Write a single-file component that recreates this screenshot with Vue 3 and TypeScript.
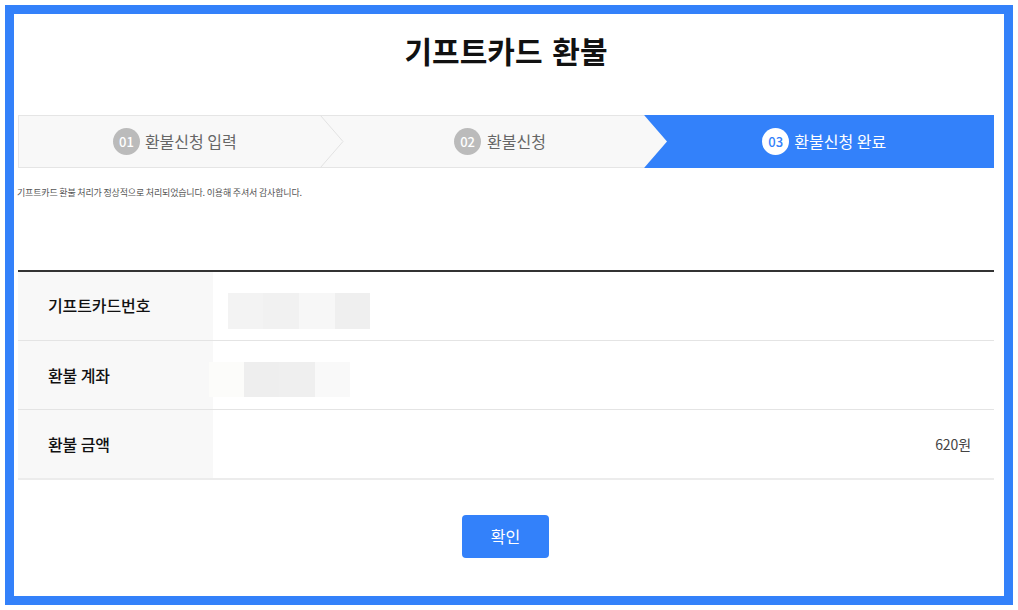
<script setup lang="ts">
interface Step { num: string; label: string; cls: string }
interface Cell { width: number; color: string }
const steps: Step[] = [
  { num: '01', label: '환불신청 입력', cls: 'one' },
  { num: '02', label: '환불신청', cls: 'two' },
  { num: '03', label: '환불신청 완료', cls: 'three' },
]
const cardCells: Cell[] = [
  { width: 35, color: '#f3f3f3' },
  { width: 36, color: '#f1f1f1' },
  { width: 36, color: '#f7f7f7' },
  { width: 35, color: '#efefef' },
]
const accountCells: Cell[] = [
  { width: 35, color: '#fcfcfa' },
  { width: 35, color: '#eeeeee' },
  { width: 36, color: '#efefef' },
  { width: 35, color: '#f9f9f9' },
]
</script>

<template>
  <div class="page">
    <main class="frame">
      <h1 class="title">기프트카드 환불</h1>

      <ol class="stepper">
        <li v-for="s in steps" :key="s.num" class="step" :class="s.cls">
          <span class="num">{{ s.num }}</span>
          <span class="label">{{ s.label }}</span>
        </li>
        <svg class="chevron" width="24" height="53" viewBox="0 0 24 53">
          <path d="M0.5 0.5 L23 26.5 L0.5 52.5" fill="none" stroke="#e2e2e2" stroke-width="1" />
        </svg>
        <svg class="tip" width="25" height="53" viewBox="0 0 25 53">
          <path d="M0 0 H1 L24 26.5 L1 53 H0 Z" fill="#f8f8f8" />
          <path d="M0 0.5 H1 M0 52.5 H1" fill="none" stroke="#e5e5e5" stroke-width="1" />
        </svg>
      </ol>

      <p class="notice">기프트카드 환불 처리가 정상적으로 처리되었습니다. 이용해 주셔서 감사합니다.</p>

      <div class="table">
        <div class="row">
          <div class="th">기프트카드번호</div>
          <div class="td">
            <div class="masked card">
              <span v-for="(c, i) in cardCells" :key="i" :style="{ width: c.width + 'px', background: c.color }"></span>
            </div>
          </div>
        </div>
        <div class="row">
          <div class="th low">환불 계좌</div>
          <div class="td">
            <div class="masked account">
              <span v-for="(c, i) in accountCells" :key="i" :style="{ width: c.width + 'px', background: c.color }"></span>
            </div>
          </div>
        </div>
        <div class="row last">
          <div class="th low">환불 금액</div>
          <div class="td amount">620원</div>
        </div>
      </div>

      <div class="actions">
        <button class="confirm" type="button">확인</button>
      </div>
    </main>
  </div>
</template>

<style>
html, body { margin: 0; background: #fff; }
</style>

<style scoped>
.page {
  width: 1018px;
  height: 610px;
  box-sizing: border-box;
  padding: 5px;
  font-family: "Noto Sans CJK KR", "Noto Sans", sans-serif;
  overflow: hidden;
}
.frame {
  width: 1008px;
  height: 600px;
  box-sizing: border-box;
  border: 9px solid #3381fa;
  padding: 0 10px 0 4px;
  background: #fff;
}
.title {
  margin: 0;
  height: 101px;
  padding-top: 13px;
  box-sizing: border-box;
  text-align: center;
  font-size: 30px;
  line-height: 46px;
  font-weight: 700;
  word-spacing: 3px;
  color: #111;
}
.stepper {
  position: relative;
  display: flex;
  height: 53px;
  margin: 0;
  padding: 0;
  list-style: none;
  box-sizing: border-box;
  background: #f8f8f8;
  border: 1px solid #e5e5e5;
}
.step {
  display: flex;
  align-items: center;
  justify-content: center;
  box-sizing: border-box;
  gap: 5px;
  color: #666;
  font-size: 16px;
}
.one { width: 301px; padding-left: 11px; }
.two { width: 324px; padding-left: 37px; gap: 6px; }
.three {
  width: 351px;
  margin: -1px -1px -1px 0;
  padding-left: 11px;
  gap: 5px;
  background: #3381fa;
  color: #fff;
}
.num {
  width: 27px;
  height: 27px;
  border-radius: 50%;
  background: #bbb;
  color: #fff;
  font-size: 13px;
  font-weight: 500;
  line-height: 27px;
  text-align: center;
  flex: none;
}
.three .num {
  background: #fff;
  color: #3381fa;
}
.label {
  line-height: 24px;
  margin-top: -2px;
}
.chevron {
  position: absolute;
  left: 301px;
  top: -1px;
}
.tip {
  position: absolute;
  left: 624px;
  top: -1px;
}
.notice {
  margin: 0;
  height: 102px;
  padding-top: 18px;
  box-sizing: border-box;
  font-size: 9px;
  line-height: 14px;
  letter-spacing: -0.18px;
  color: #555;
  margin-left: -1px;
}
.table {
  border-top: 2px solid #333;
}
.row {
  display: flex;
  height: 69px;
  box-sizing: border-box;
  border-bottom: 1px solid #e4e4e4;
}
.row.last {
  height: 70px;
  border-bottom: 2px solid #ececec;
}
.th {
  width: 195px;
  flex: none;
  box-sizing: border-box;
  padding: 0 0 2px 30px;
  background: #f8f8f8;
  display: flex;
  align-items: center;
  font-size: 16px;
  font-weight: 500;
  letter-spacing: -0.1px;
  color: #111;
}
.th.low { padding-bottom: 1px; }
.td {
  flex: 1;
  display: flex;
  align-items: center;
  min-width: 0;
}
.masked {
  display: flex;
  height: 36px;
  position: relative;
}
.card { margin: 9px 0 0 15px; }
.account { height: 35px; margin: 8px 0 0 -4px; }
.amount {
  justify-content: flex-end;
  padding: 0 23px 1px 0;
  font-size: 14px;
  letter-spacing: -0.1px;
  color: #444;
}
.actions {
  display: flex;
  justify-content: center;
  padding-top: 35px;
}
.confirm {
  width: 87px;
  height: 43px;
  margin-right: 1px;
  border: 0;
  border-radius: 4px;
  background: #3381fa;
  color: #fff;
  font-family: inherit;
  font-size: 16px;
  padding: 0 0 1px;
}
</style>
